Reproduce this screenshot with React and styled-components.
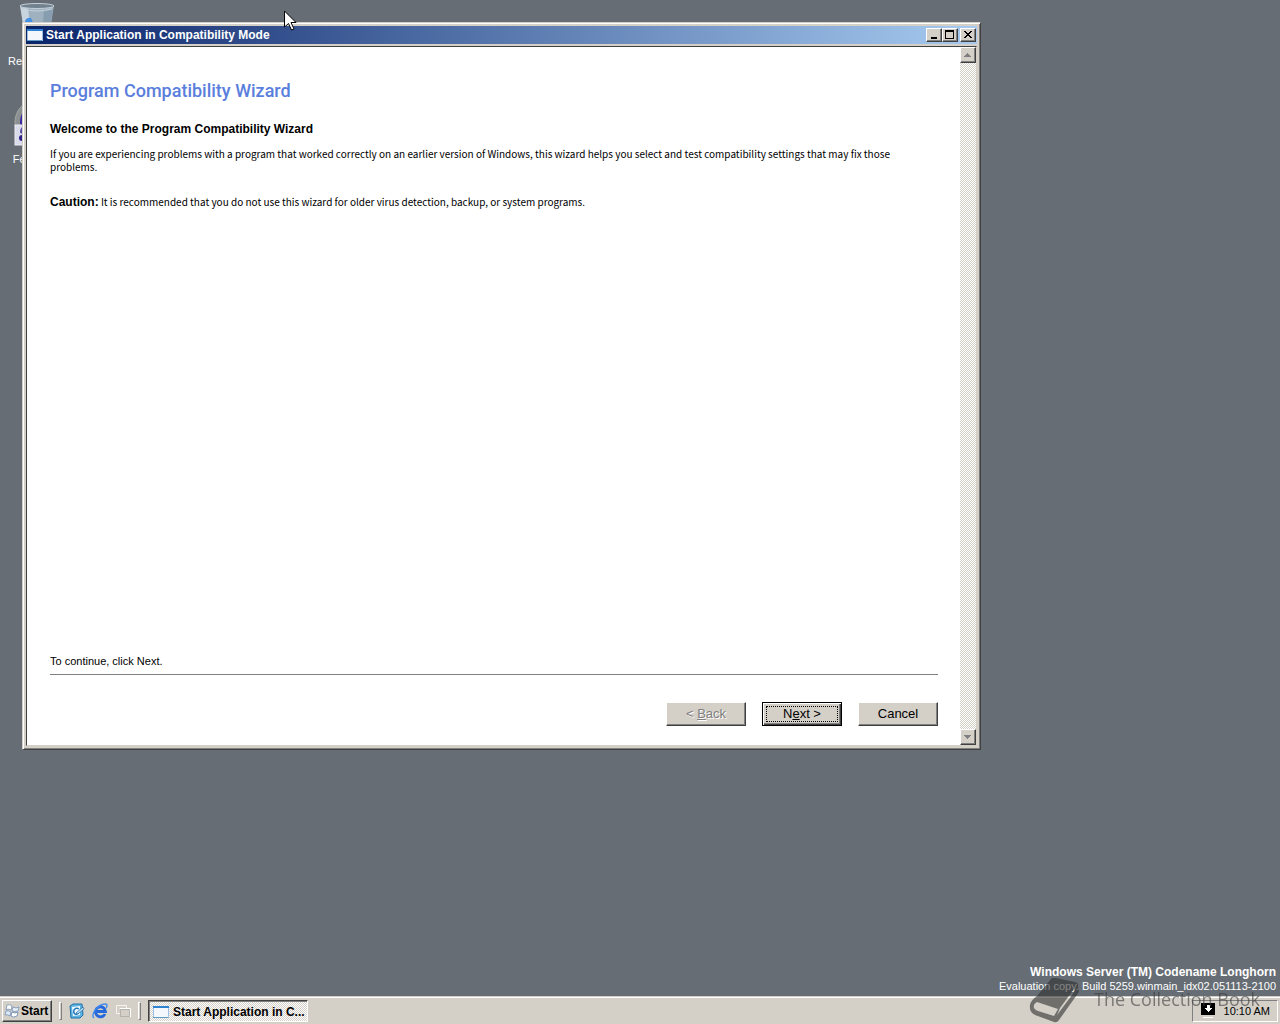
import styled, { createGlobalStyle, css } from "styled-components";

const GlobalStyle = createGlobalStyle`
  * {
    box-sizing: border-box;
  }
  body {
    margin: 0;
    background: #666d74;
    font-family: "Liberation Sans", Arial, sans-serif;
    font-size: 11px;
    color: #000;
  }
`;

const dither = css`
  background: repeating-conic-gradient(#fff 0% 25%, #d4d0c8 0% 50%) 0 0 / 2px 2px;
`;

const raised = css`
  background: #d4d0c8;
  border: 1px solid;
  border-color: #fff #404040 #404040 #fff;
  box-shadow: inset -1px -1px #808080;
`;

const label = css`
  font-family: "Liberation Sans", Arial, sans-serif;
  font-size: 12px;
  font-weight: bold;
`;

const Desktop = styled.div`
  position: relative;
  display: flex;
  flex-direction: column;
  min-height: 100vh;
  overflow: hidden;
`;
const Workspace = styled.main`
  position: relative;
  flex: 1;
  display: flex;
  flex-direction: column;
  justify-content: flex-end;
`;
const Shortcut = styled.div`
  position: absolute;
  left: 0;
  top: ${props => props.$top}px;
  width: 74px;
  display: flex;
  flex-direction: column;
  align-items: center;
  gap: 5px;
  color: #fff;
  line-height: 14px;
`;

const Window = styled.section`
  position: absolute;
  left: 22px;
  top: 22px;
  width: calc(100% - 321px);
  height: calc(100vh - 296px);
  display: flex;
  flex-direction: column;
  padding: 3px;
  background: #d4d0c8;
  border: 1px solid;
  border-color: #d4d0c8 #404040 #404040 #d4d0c8;
  box-shadow: inset 1px 1px #fff, inset -1px -1px #808080;
`;
const TitleBar = styled.header`
  display: flex;
  align-items: center;
  height: 18px;
  flex: none;
  padding: 0 1px;
  background: linear-gradient(to right, #0a246a, #a6caf0);
  color: #fff;
`;
const WindowTitle = styled.h1`
  ${label}
  flex: 1;
  margin: 0 0 0 3px;
  line-height: 18px;
`;
const CaptionButton = styled.button`
  ${raised}
  width: 16px;
  height: 14px;
  padding: 0;
  display: flex;
  align-items: center;
  justify-content: center;
  margin-left: ${props => (props.$spaced ? 2 : 0)}px;
`;

const Client = styled.div`
  flex: 1;
  display: flex;
  min-height: 0;
  margin-top: 2px;
  border: 1px solid;
  border-color: #404040 #d4d0c8 #d4d0c8 #404040;
  background: #fff;
`;
const Page = styled.article`
  flex: 1;
  display: flex;
  flex-direction: column;
  padding: 32px 22px 19px 23px;
`;
const PageTitle = styled.h2`
  margin: 0 0 20px;
  color: #5a7edc;
  font-family: Roboto, sans-serif;
  font-size: 18px;
  font-weight: 500;
  line-height: 24px;
`;
const SubTitle = styled.h3`
  ${label}
  margin: 0 0 11px;
  line-height: 13px;
`;
const Text = styled.p`
  margin: 0 0 22px;
  padding-right: 8px;
  font-family: "Noto Sans CJK SC", "Open Sans", sans-serif;
  font-size: 10px;
  line-height: 13px;
`;
const Strong = styled.strong`
  ${label}
`;
const PageFooter = styled.footer`
  margin-top: auto;
`;
const Hint = styled.p`
  margin: 0;
  padding-bottom: 6px;
  border-bottom: 1px solid #808080;
  line-height: 14px;
`;
const Actions = styled.div`
  display: flex;
  justify-content: flex-end;
  gap: 16px;
  margin-top: 27px;
`;
const Button = styled.button`
  ${raised}
  width: 80px;
  height: 24px;
  padding: 0 0 2px;
  font-family: "Liberation Sans", Arial, sans-serif;
  font-size: 13px;
  color: #000;
  &:disabled {
    color: #808080;
    text-shadow: 1px 1px #fff;
  }
  ${props =>
    props.$primary &&
    css`
      border-color: #000;
      box-shadow: inset 1px 1px #fff, inset -1px -1px #404040, inset -2px -2px #808080;
      outline: 1px dotted #000;
      outline-offset: -5px;
    `}
`;

const ScrollBar = styled.div`
  ${dither}
  width: 16px;
  display: flex;
  flex-direction: column;
  justify-content: space-between;
`;
const ScrollButton = styled.button`
  ${raised}
  width: 16px;
  height: 16px;
  padding: 0;
  display: flex;
  align-items: center;
  justify-content: center;
`;

const BuildInfo = styled.div`
  padding: 0 4px 3px;
  color: #fff;
  text-align: right;
  line-height: 14px;
`;
const BuildName = styled.div`
  ${label}
`;

const TaskBar = styled.footer`
  display: flex;
  align-items: center;
  height: 28px;
  padding: 1px 2px 0;
  background: #d4d0c8;
  border-top: 1px solid #d4d0c8;
  box-shadow: inset 0 1px #fff;
`;
const StartButton = styled.button`
  ${raised}
  ${label}
  display: flex;
  align-items: center;
  gap: 1px;
  width: 50px;
  height: 22px;
  padding: 0 1px;
`;
const Divider = styled.div`
  width: 3px;
  height: 18px;
  margin: 0 7px;
  border: 1px solid;
  border-color: #fff #808080 #808080 #fff;
`;
const QuickLaunch = styled.nav`
  display: flex;
  gap: 7px;
`;
const QuickButton = styled.button`
  display: flex;
  padding: 0;
  border: 0;
  background: none;
`;
const TaskButton = styled.button`
  ${dither}
  ${label}
  display: flex;
  align-items: center;
  gap: 4px;
  width: 160px;
  height: 22px;
  padding: 1px 2px 0 4px;
  border: 1px solid;
  border-color: #404040 #fff #fff #404040;
  box-shadow: inset 1px 1px #808080;
  color: #000;
  white-space: nowrap;
`;
const Tray = styled.div`
  display: flex;
  align-items: center;
  gap: 9px;
  height: 22px;
  margin-left: auto;
  padding: 0 7px 0 8px;
  border: 1px solid;
  border-color: #808080 #fff #fff #808080;
`;

const Watermark = styled.div`
  position: absolute;
  right: 20px;
  bottom: 0;
  display: flex;
  gap: 13px;
  opacity: 0.6;
  color: #3c3c3c;
  font-family: "Open Sans", sans-serif;
  font-size: 18px;
  line-height: 42px;
  pointer-events: none;
`;
const Pointer = styled.svg`
  position: absolute;
  left: 284px;
  top: 10px;
  pointer-events: none;
`;

const AppIcon = () => (
  <svg width="16" height="16" viewBox="0 0 16 16" shapeRendering="crispEdges">
    <rect x="0" y="2" width="16" height="12" fill="#f4f8fc" />
    <rect x="0" y="2" width="16" height="2" fill="#2f83d0" />
    <rect x="0" y="4" width="1" height="10" fill="#9dc1e4" />
    <rect x="0" y="13" width="16" height="1" fill="#5f9cc4" />
    <rect x="15" y="4" width="1" height="10" fill="#9dc1e4" />
  </svg>
);

const BinIcon = () => (
  <svg width="40" height="48" viewBox="0 0 40 48">
    <path d="M3 4 L9 43 Q20 48 31 43 L37 4 Z" fill="#a9bccb" opacity=".85" />
    <path d="M3 4 L7 30 L14 30 L11 8 Z" fill="#d5e1ea" opacity=".75" />
    <path d="M27 9 L36 8 L32 34 L25 34 Z" fill="#7893a9" opacity=".6" />
    <path d="M8 20 Q10 16 14 17 L17 24 L9 24 Z" fill="#4390e5" />
    <ellipse cx="20" cy="5" rx="17" ry="2.5" fill="#72818e" stroke="#c4d0d9" />
    <path d="M5 8 Q20 12 35 8" fill="none" stroke="#c6d3dd" />
  </svg>
);

const FeedbackIcon = () => (
  <svg width="46" height="48" viewBox="0 0 46 48">
    <ellipse cx="23" cy="23" rx="22" ry="22" fill="#8b9190" stroke="#a4a8a6" />
    <ellipse cx="25" cy="23" rx="19" ry="19" fill="#3926a0" />
    <rect x="1" y="26" width="19" height="20" fill="#dadbea" stroke="#eeeef5" />
    <path d="M12 27 Q7 29 7 33 Q9 35 12 35" fill="none" stroke="#594bab" strokeWidth="2" />
    <circle cx="8" cy="39" r="3" fill="#30218a" />
  </svg>
);

const FlagIcon = () => (
  <svg width="16" height="16" viewBox="0 0 16 16">
    <path d="M3 2 Q6 1 8 3 L7 7 Q4 5 2 7 Z" fill="#fff" stroke="#7892b4" strokeWidth=".8" />
    <path d="M9 4 Q12 6 15 4 L14 8 Q11 9 8 8 Z" fill="#e5eefa" stroke="#7892b4" strokeWidth=".8" />
    <path d="M2 8 Q4 7 7 9 L6 13 Q3 11 1 12 Z" fill="#dce9f8" stroke="#7892b4" strokeWidth=".8" />
    <path d="M8 9 Q11 11 14 9 L13 13 Q9 15 7 13 Z" fill="#fff" stroke="#6785b0" strokeWidth=".8" />
  </svg>
);

const MailIcon = () => (
  <svg width="16" height="16" viewBox="0 0 16 16">
    <path d="M1 3 L4 1 H13 L14 12 L11 15 H2 Z" fill="#5fb4e2" stroke="#1e6fa9" />
    <path d="M3 4 L11 3 V12 L4 13 Z" fill="#f1faff" />
    <path d="M10 6 Q7 4 5 7 Q4 10 6 11 Q9 12 10 9" fill="none" stroke="#2377bb" strokeWidth="1.4" />
    <path d="M7 10 L14 4 L15 6 L9 11 Z" fill="#b8e0f8" stroke="#14649f" strokeWidth=".7" />
  </svg>
);

const ExplorerIcon = () => (
  <svg width="16" height="16" viewBox="0 0 16 16">
    <path d="M13 11 A5 5 0 1 1 13.5 8.5 H5" fill="none" stroke="#2468dc" strokeWidth="2.8" />
    <path d="M2 15 C-2 12 6 1 13 1 C16 1 15 4 14 5" fill="none" stroke="#3d88ee" strokeWidth="1.3" />
  </svg>
);

const DesktopIcon = () => (
  <svg width="16" height="16" viewBox="0 0 16 16" fill="#d4d0c8">
    <path d="M1.5 2.5 H11.5 V10.5 H1.5 Z" stroke="#f5f4f1" />
    <path d="M5.5 6.5 H14.5 V13.5 H5.5 Z" stroke="#b5b2ac" />
    <path d="M4.5 5.5 H15.5 V14" fill="none" stroke="#fff" />
  </svg>
);

const BookIcon = () => (
  <svg width="52" height="46" viewBox="0 0 52 46">
    <path
      fillRule="evenodd"
      d="M22 1 Q24 -1 27 0 L46 4 Q50 5 49 9 L50 14 L30 42 Q28 45 25 44 L6 37 Q0 34 1 27 Q2 22 8 18 Z
        M8 24 Q4 26 5 30 Q6 32 9 33 L25 38 L29 31 Z
        M31 30 L28 37 L46 13 L45 11 Z"
      fill="#303030"
    />
  </svg>
);

function App() {
  return (
    <Desktop>
      <GlobalStyle />
      <Workspace>
        <Shortcut $top={1}>
          <BinIcon />
          Recycle Bin
        </Shortcut>
        <Shortcut $top={99}>
          <FeedbackIcon />
          Feedback
        </Shortcut>
        <Window>
          <TitleBar>
            <AppIcon />
            <WindowTitle>Start Application in Compatibility Mode</WindowTitle>
            <CaptionButton aria-label="Minimize">
              <svg width="12" height="10" shapeRendering="crispEdges">
                <path d="M3 7h6v2h-6z" />
              </svg>
            </CaptionButton>
            <CaptionButton aria-label="Maximize">
              <svg width="12" height="10" shapeRendering="crispEdges">
                <path d="M1 0h9v9h-9zM2 2v6h7v-6z" fillRule="evenodd" />
              </svg>
            </CaptionButton>
            <CaptionButton aria-label="Close" $spaced>
              <svg width="12" height="10" shapeRendering="crispEdges">
                <path d="M2 1h2v1h1v1h2v-1h1v-1h2v1h-1v1h-1v1h-1v1h1v1h1v1h1v1h-2v-1h-1v-1h-2v1h-1v1h-2v-1h1v-1h1v-1h1v-1h-1v-1h-1v-1h-1z" />
              </svg>
            </CaptionButton>
          </TitleBar>
          <Client>
            <Page>
              <PageTitle>Program Compatibility Wizard</PageTitle>
              <SubTitle>Welcome to the Program Compatibility Wizard</SubTitle>
              <Text>
                If you are experiencing problems with a program that worked
                correctly on an earlier version of Windows, this wizard helps
                you select and test compatibility settings that may fix those
                problems.
              </Text>
              <Text>
                <Strong>Caution:</Strong> It is recommended that you do not use
                this wizard for older virus detection, backup, or system
                programs.
              </Text>
              <PageFooter>
                <Hint>To continue, click Next.</Hint>
                <Actions>
                  <Button disabled>
                    &lt; <u>B</u>ack
                  </Button>
                  <Button $primary>
                    N<u>e</u>xt &gt;
                  </Button>
                  <Button>Cancel</Button>
                </Actions>
              </PageFooter>
            </Page>
            <ScrollBar>
              <ScrollButton aria-label="Scroll up">
                <svg width="8" height="5" shapeRendering="crispEdges">
                  <path d="M3 0h1v1h1v1h1v1h1v1h-7v-1h1v-1h1v-1h1z" fill="#808080" />
                </svg>
              </ScrollButton>
              <ScrollButton aria-label="Scroll down">
                <svg width="8" height="5" shapeRendering="crispEdges">
                  <path d="M0 0h7v1h-1v1h-1v1h-1v1h-1v-1h-1v-1h-1v-1h-1z" fill="#808080" />
                </svg>
              </ScrollButton>
            </ScrollBar>
          </Client>
        </Window>
        <BuildInfo>
          <BuildName>Windows Server (TM) Codename Longhorn</BuildName>
          Evaluation copy. Build 5259.winmain_idx02.051113-2100
        </BuildInfo>
      </Workspace>
      <TaskBar>
        <StartButton>
          <FlagIcon />
          Start
        </StartButton>
        <Divider />
        <QuickLaunch>
          <QuickButton aria-label="Mail">
            <MailIcon />
          </QuickButton>
          <QuickButton aria-label="Internet Explorer">
            <ExplorerIcon />
          </QuickButton>
          <QuickButton aria-label="Show desktop">
            <DesktopIcon />
          </QuickButton>
        </QuickLaunch>
        <Divider />
        <TaskButton>
          <AppIcon />
          Start Application in C...
        </TaskButton>
        <Tray>
          <svg width="14" height="16" viewBox="0 0 14 16" shapeRendering="crispEdges">
            <rect x="0" y="0" width="14" height="12" fill="#000" />
            <path d="M6 2h3v3h2v1h-1v1h-1v1h-1v1h-1v-1h-1v-1h-1v-1h-1v-1h2z" fill="#fff" />
            <rect x="2" y="14" width="10" height="1" fill="#fff" />
          </svg>
          <span>10:10 AM</span>
        </Tray>
      </TaskBar>
      <Watermark>
        <BookIcon />
        The Collection Book
      </Watermark>
      <Pointer width="13" height="21" viewBox="0 0 13 21">
        <path
          d="M.5 1 V17 L4.5 13.5 L7.5 20 L10 19 L7 12.5 H12 Z"
          fill="#fff"
          stroke="#000"
        />
      </Pointer>
    </Desktop>
  );
}

export default App;
